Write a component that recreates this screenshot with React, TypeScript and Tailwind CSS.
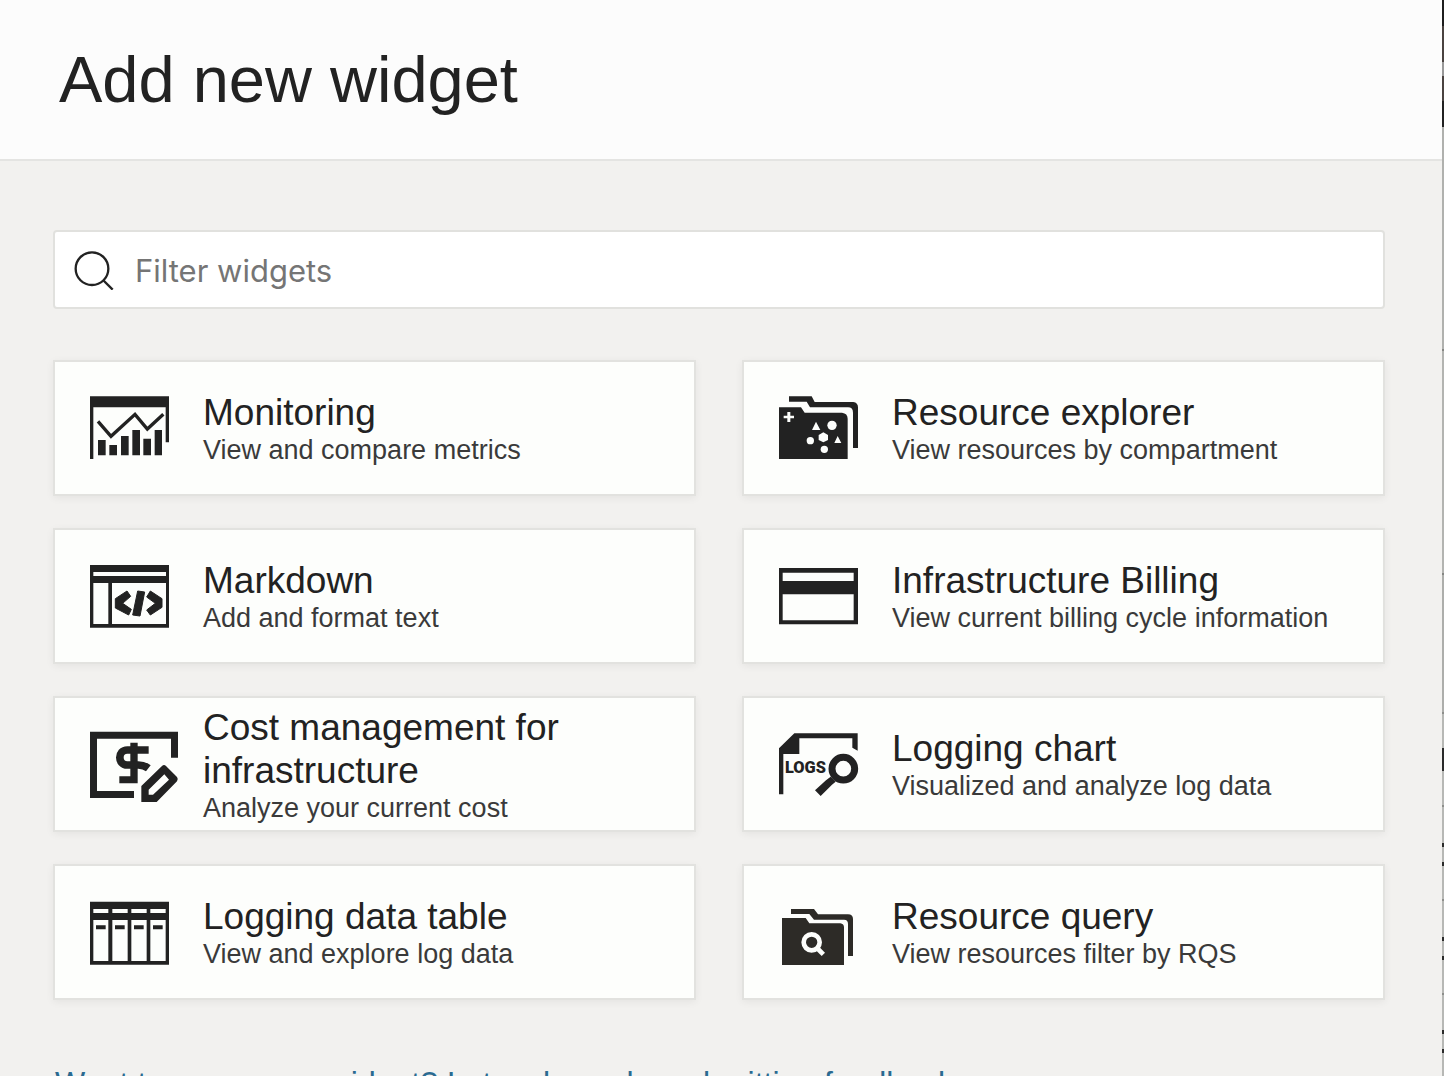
import { useState } from "react";
import type { ReactNode } from "react";

// All widget icons share one 270x240 drawing grid, shown at a third of that size
function Icon({ viewBox, color = "#222222", children }: { viewBox: string; color?: string; children: ReactNode }) {
  return (
    <svg viewBox={viewBox} fill={color} className="h-[80px] w-[90px] shrink-0" aria-hidden="true">
      {children}
    </svg>
  );
}

const MonitoringIcon = () => (
  <Icon viewBox="60 24 270 240">
    <path d="M60 49H297V187H287V82H70V237H60Z" />
    <path d="M84 180h23v46h-23zM118 195h23v31h-23zM153 168h23v58h-23zM187 150h23v76h-23zM220 176h23v50h-23zM254 150h22v76h-22z" />
    <path d="M84 124L123 169L195 103L232 147L280 103" fill="none" stroke="#222222" strokeWidth="10" />
  </Icon>
);

const ExplorerIcon = () => (
  <Icon viewBox="57 24 270 240">
    <path d="M87 49H155L164 66H280Q294 68 294 82V204H279V98Q279 82 264 82H150L140 65H87Z" />
    <path d="M56 82H123L134 98H246Q263 100 263 116V237H56Z" />
    <g fill="#fdfefc">
      <path d="M82 96h9v11h11v8h-11v11h-9v-11h-11v-8h11z" />
      <path d="M168 125L181 150H156ZM233 168L244 189H223Z" />
      <path d="M190 157L204 165V180L190 187L176 180V165Z" />
      <circle cx="216" cy="136" r="14" />
      <circle cx="151" cy="182" r="11" />
      <circle cx="193" cy="208" r="11" />
    </g>
  </Icon>
);

const MarkdownIcon = () => (
  <Icon viewBox="60 18 270 240">
    <path fillRule="evenodd" d="M60 45H297V233H60ZM70 66V78H288V66ZM70 99V222H115V99ZM126 99V222H288V99Z" />
    <path
      d="M171 123L136 146V174L176 195L184 178L158 160L182 139ZM241 123L276 146V172L241 195L230 180L256 160L230 141ZM203 123L224 126L210 198L188 195Z"
      stroke="#222222"
      strokeWidth="3"
    />
  </Icon>
);

const BillingIcon = () => (
  <Icon viewBox="57 18 270 240">
    <path fillRule="evenodd" d="M57 54H294V223H57ZM68 68V93H281V68ZM68 133V211H281V133Z" />
  </Icon>
);

const CostIcon = () => (
  <Icon viewBox="60 24 270 240">
    <path d="M60 47H324V125H303V68H81V225H192V246H60Z" />
    <path d="M181 80H203V202H148V181H181Z" />
    <path d="M236 102H172C142 102 142 147 172 147H205Q222 147 235 157" fill="none" stroke="#222222" strokeWidth="23" />
    <path fillRule="evenodd" d="M276 150Q282 144 288 150L321 183Q326 190 321 196L260 258H214V210ZM283 175L236 221V236H249L297 191Z" />
  </Icon>
);

const LogsIcon = () => (
  <Icon viewBox="57 24 270 240">
    <path d="M103 52H293V104L277 95V67H118V114H70V235H56V98Z" />
    <text x="75" y="170" fontSize="49" fontWeight="900" fontFamily="Roboto, sans-serif">
      LOGS
    </text>
    <circle cx="250" cy="158" r="34" fill="none" stroke="#222222" strokeWidth="21" />
    <path d="M212 182L227 197L216 206L182 240L165 223L198 193Z" />
  </Icon>
);

const TableIcon = () => (
  <Icon viewBox="60 24 270 240">
    <path
      fillRule="evenodd"
      d="M60 53H297V242H60ZM70 75V87H115V75ZM127 75V87H173V75ZM184 75V87H230V75ZM241 75V87H287V75ZM70 108V231H115V108ZM127 108V231H173V108ZM184 108V231H230V108ZM241 108V231H287V108Z"
    />
    <path d="M78 124h29v12h-29zM135 124h29v12h-29zM192 124h29v12h-29zM249 124h29v12h-29z" />
  </Icon>
);

const QueryIcon = () => (
  <Icon viewBox="57 24 270 240" color="#2d2b27">
    <path d="M93 75H162L174 91H264Q279 91 279 105V216H264V120Q264 107 252 107H162L148 90H93Z" />
    <path d="M66 102H137L148 118H241Q252 120 252 130V243H66Z" />
    <g fill="none" stroke="#fdfefc" strokeWidth="14">
      <circle cx="155" cy="175" r="24" />
      <path d="M171 192L190 211" />
    </g>
  </Icon>
);

const widgets = [
  { Icon: MonitoringIcon, title: "Monitoring", text: "View and compare metrics" },
  { Icon: ExplorerIcon, title: "Resource explorer", text: "View resources by compartment" },
  { Icon: MarkdownIcon, title: "Markdown", text: "Add and format text" },
  { Icon: BillingIcon, title: "Infrastructure Billing", text: "View current billing cycle information" },
  { Icon: CostIcon, title: "Cost management for infrastructure", text: "Analyze your current cost" },
  { Icon: LogsIcon, title: "Logging chart", text: "Visualized and analyze log data" },
  { Icon: TableIcon, title: "Logging data table", text: "View and explore log data" },
  { Icon: QueryIcon, title: "Resource query", text: "View resources filter by RQS" },
];

// Sliver of the dashboard that stays visible beside the panel
const backdrop = [
  "h-[26px] bg-[#1e1e1e]",
  "h-[36px] bg-[#4a4340]",
  "h-[14px] bg-[#999999]",
  "h-[25px] bg-[#4a4340]",
  "h-[26px] bg-[#222222]",
  "h-[222px] bg-[#b0b1ae]",
  "h-[2px] bg-[#858683]",
  "h-[222px] bg-[#b3b4b1]",
  "h-[2px] bg-[#858683]",
  "h-[137px] bg-[#adaeab]",
  "h-[2px] bg-[#8d8e8b]",
  "h-[34px] bg-[#b7b8b5]",
  "h-[23px] bg-[#2a2a2a]",
  "h-[34px] bg-[#b7b8b5]",
  "h-[2px] bg-[#8d8e8b]",
  "h-[36px] bg-[#b7b8b5]",
  "h-[4px] bg-[#2a2a2a]",
  "h-[15px] bg-[#b7b8b5]",
  "h-[4px] bg-[#2a2a2a]",
  "h-[33px] bg-[#b7b8b5]",
  "h-[2px] bg-[#8d8e8b]",
  "h-[36px] bg-[#b7b8b5]",
  "h-[4px] bg-[#2a2a2a]",
  "h-[15px] bg-[#b7b8b5]",
  "h-[4px] bg-[#2a2a2a]",
  "h-[33px] bg-[#b7b8b5]",
  "h-[2px] bg-[#8d8e8b]",
  "h-[35px] bg-[#b7b8b5]",
  "h-[4px] bg-[#2a2a2a]",
  "h-[15px] bg-[#b7b8b5]",
  "h-[4px] bg-[#2a2a2a]",
  "grow bg-[#b7b8b5]",
];

export default function App() {
  const [filter, setFilter] = useState("");
  const shown = widgets.filter((w) => w.title.toLowerCase().includes(filter.toLowerCase()));

  return (
    <div className="flex h-screen overflow-hidden bg-[#f2f1ef] font-['Liberation_Sans',Arial,sans-serif] text-[#222222]">
      <main className="min-w-0 flex-1">
        <header className="border-b-2 border-[#e4e4e2] bg-[#fcfcfc] px-[59px] py-[43px]">
          <h1 className="text-[65px] leading-[73px]">Add new widget</h1>
        </header>

        <div className="pt-[69px] pr-[57px] pl-[53px]">
          <label className="flex h-[79px] items-center gap-[21px] rounded-[4px] border-2 border-[#e1e1de] bg-white px-[19px]">
            <svg viewBox="102 90 120 120" fill="none" stroke="#222222" strokeWidth="7" className="size-10 shrink-0" aria-hidden="true">
              <circle cx="156" cy="146" r="49" />
              <path d="M189 180L218 209" />
            </svg>
            <input
              type="text"
              aria-label="Filter widgets"
              placeholder="Filter widgets"
              value={filter}
              onChange={(e) => setFilter(e.target.value)}
              className="min-w-0 flex-1 bg-transparent pt-[2px] font-['Inter',sans-serif] text-[31px] leading-[40px] outline-none placeholder:text-[#757575]"
            />
          </label>

          <div className="mt-[51px] grid grid-cols-2 gap-x-[46px] gap-y-8">
            {shown.map((w) => (
              <button
                key={w.title}
                type="button"
                className="flex h-[136px] items-center gap-[23px] border-2 border-[#e2e2df] bg-[#fdfefc] pl-[35px] text-left shadow-[0_2px_8px_rgba(0,0,0,0.06)]"
              >
                <w.Icon />
                <span className="min-w-0 flex-1 pt-[2px]">
                  <span className="block text-[37px] leading-[43px]">{w.title}</span>
                  <span className="block text-[27px] leading-[33px] whitespace-nowrap text-[#3a3a3a]">{w.text}</span>
                </span>
              </button>
            ))}
          </div>

          <a href="#feedback" className="mt-[63px] block pl-[2px] text-[32px] leading-[40px] text-[#2a6a91]">
            Want to see a new widget? Let us know by submitting feedback
          </a>
        </div>
      </main>

      <aside className="flex w-[2px] shrink-0 flex-col" aria-hidden="true">
        {backdrop.map((c, i) => (
          <div key={i} className={c} />
        ))}
      </aside>
    </div>
  );
}
